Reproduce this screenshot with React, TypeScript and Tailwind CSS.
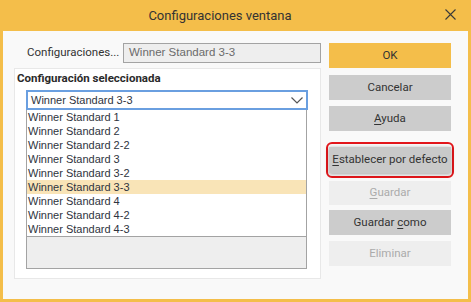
import React from "react";

const items = [
  "Winner Standard 1",
  "Winner Standard 2",
  "Winner Standard 2-2",
  "Winner Standard 3",
  "Winner Standard 3-2",
  "Winner Standard 3-3",
  "Winner Standard 4",
  "Winner Standard 4-2",
  "Winner Standard 4-3",
];

const ui = { fontFamily: "Roboto, 'Liberation Sans', sans-serif" };
const list = { fontFamily: "'Liberation Sans', Arial, sans-serif" };

export default function App() {
  return (
    <div className="w-[471px] h-[302px] bg-[#F4BE4A] flex flex-col" style={ui}>
      <div className="h-[31px] flex items-center justify-center relative shrink-0 pr-[31px]">
        <span className="text-[13px] text-[#333333]">Configuraciones ventana</span>
        <svg className="absolute left-[445px] top-[9px]" width="11" height="11" viewBox="0 0 11 11">
          <path d="M0.5 0.5 L10.5 10.5 M10.5 0.5 L0.5 10.5" stroke="#3a3a3a" strokeWidth="1.1" fill="none" />
        </svg>
      </div>
      <div className="flex-1 mx-[3px] mb-[3px] bg-[#F9F9F9] flex pl-[11px] pt-[12px]">
        <div className="w-[307px] flex flex-col">
          <div className="flex items-center h-[20px]">
            <span className="text-[11.5px] text-[#333333] pl-[13px] w-[109px] shrink-0">Configuraciones...</span>
            <div className="w-[198px] h-[20px] border border-[#A3A3A3] bg-[#EEEEEE] flex items-center pl-[5px] text-[11.5px] text-[#6b6b6b]" style={list}>
              Winner Standard 3-3
            </div>
          </div>
          <div className="mt-[5px] h-[211px] bg-white border border-[#E8E8E8] flex flex-col">
            <div className="h-[18px] flex items-center pl-[2px] text-[11.5px] font-bold text-[#2a2a2a] mt-[1px]">
              Configuración seleccionada
            </div>
            <div className="ml-[11px] mt-[2px] w-[282px] flex flex-col" style={list}>
              <div className="h-[20px] border-2 border-[#6A9FE0] flex items-center justify-between pl-[3px] pr-[3px] text-[11px] text-[#2e3440]">
                <span>Winner Standard 3-3</span>
                <svg width="12" height="7" viewBox="0 0 12 7">
                  <path d="M0.5 0.5 L6 6 L11.5 0.5" stroke="#555" strokeWidth="1.2" fill="none" />
                </svg>
              </div>
              <div className="w-[281px] border border-t-0 border-[#A3A3A3] flex flex-col">
                {items.map((t) => (
                  <div
                    key={t}
                    className={
                      "h-[14px] leading-[14px] pl-[1px] text-[11px] text-[#2e3440] " +
                      (t === "Winner Standard 3-3" ? "bg-[#F9E4B7]" : "bg-white")
                    }
                  >
                    {t}
                  </div>
                ))}
                <div className="h-[32px] bg-[#EEEEEE] border-t border-[#A3A3A3]" />
              </div>
            </div>
          </div>
        </div>
        <div className="ml-[8px] w-[122px] flex flex-col text-[11.5px] text-[#333333]">
          <div className="h-[25px] bg-[#F4BE4A] flex items-center justify-center">OK</div>
          <div className="mt-[7px] h-[25px] bg-[#CCCCCC] flex items-center justify-center">Cancelar</div>
          <div className="mt-[6px] h-[25px] bg-[#CCCCCC] flex items-center justify-center">
            <span><span className="underline underline-offset-2">A</span>yuda</span>
          </div>
          <div className="mt-[11px] -mx-[3px] h-[36px] border-2 border-[#E3161B] rounded-[6px] px-[1px] py-[3px]">
            <div className="h-full bg-[#C9C9C9] flex items-center justify-center shadow-[0_1px_4px_rgba(0,0,0,0.35)]">
              <span><span className="underline underline-offset-2">E</span>stablecer por defecto</span>
            </div>
          </div>
          <div className="mt-[3px] h-[24px] bg-[#EEEEEE] text-[#ABABAB] flex items-center justify-center">
            <span><span className="underline underline-offset-2">G</span>uardar</span>
          </div>
          <div className="mt-[5px] h-[25px] bg-[#CCCCCC] flex items-center justify-center">
            <span>Guardar <span className="underline underline-offset-2">c</span>omo</span>
          </div>
          <div className="mt-[6px] h-[25px] bg-[#EEEEEE] text-[#ABABAB] flex items-center justify-center">Eliminar</div>
        </div>
      </div>
    </div>
  );
}
